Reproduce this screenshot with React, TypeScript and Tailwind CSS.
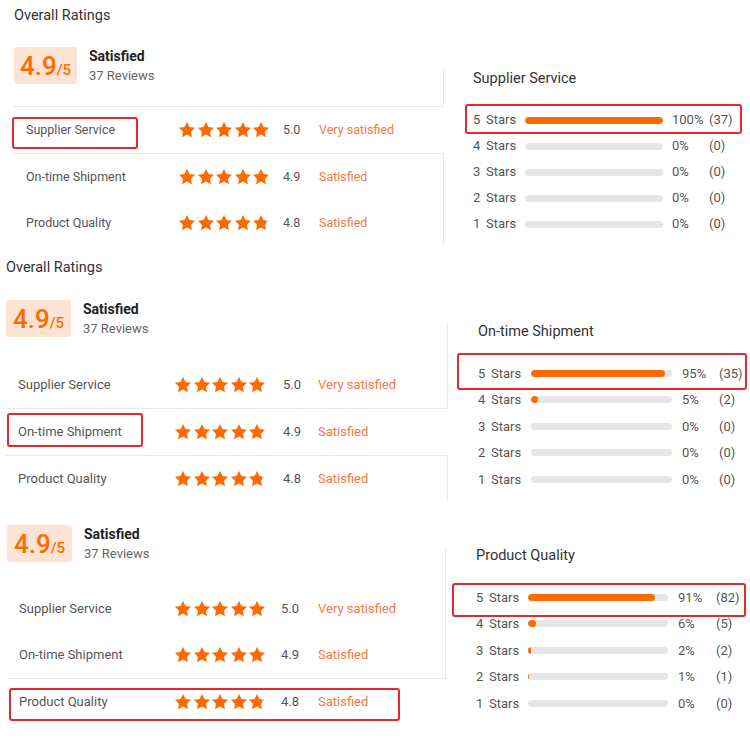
import { useId } from 'react';

type Row = { label: string; value: string; status: string; fill: number };
type Dist = { pct: number; count: number };

const ROWS: Row[] = [
  { label: 'Supplier Service', value: '5.0', status: 'Very satisfied', fill: 1 },
  { label: 'On-time Shipment', value: '4.9', status: 'Satisfied', fill: 1 },
  { label: 'Product Quality', value: '4.8', status: 'Satisfied', fill: 0.8 },
];

type Cfg = {
  h: string;
  pad: string;
  title: boolean;
  flexMt: string;
  leftW: string;
  rowText: string;
  labelW: string;
  starsW: string;
  valueW: string;
  scoreW: string;
  spacer: string;
  highlight: number;
  rightMl: string;
  rightTitle: string;
  rightMt: string;
  rightRowH: string;
  rLabelW: string;
  barW: string;
  pctW: string;
  dist: Dist[];
  redLeft: string;
  redRight: string;
};

const CFGS: Cfg[] = [
  {
    h: 'h-[250px]',
    pad: 'pl-[14px] pt-[6px]',
    title: true,
    flexMt: 'mt-[21px]',
    leftW: 'w-[430px]',
    rowText: 'text-[12.5px]',
    labelW: 'w-[153px]',
    starsW: 'w-[104px]',
    valueW: 'w-[36px]',
    scoreW: 'w-[63px]',
    spacer: 'h-[22px]',
    highlight: 0,
    rightMl: 'ml-[29px]',
    rightTitle: 'Supplier Service',
    rightMt: 'mt-[22px]',
    rightRowH: 'h-[26px]',
    rLabelW: 'w-[52px]',
    barW: 'w-[138px]',
    pctW: 'w-[37px] ml-[9px]',
    dist: [
      { pct: 100, count: 37 },
      { pct: 0, count: 0 },
      { pct: 0, count: 0 },
      { pct: 0, count: 0 },
      { pct: 0, count: 0 },
    ],
    redLeft: 'left-[12px] top-[117px] w-[126px] h-[32px]',
    redRight: 'left-[465px] top-[104px] w-[277px] h-[30px]',
  },
  {
    h: 'h-[260px]',
    pad: 'pl-[6px] pt-[8px]',
    title: true,
    flexMt: 'mt-[22px]',
    leftW: 'w-[442px]',
    rowText: 'text-[13px]',
    labelW: 'w-[157px]',
    starsW: 'w-[108px]',
    valueW: 'w-[35px]',
    scoreW: 'w-[65px]',
    spacer: 'h-[25px]',
    highlight: 1,
    rightMl: 'ml-[30px]',
    rightTitle: 'On-time Shipment',
    rightMt: 'mt-[22px]',
    rightRowH: 'h-[26.5px]',
    rLabelW: 'w-[53px]',
    barW: 'w-[141px]',
    pctW: 'w-[37px] ml-[10px]',
    dist: [
      { pct: 95, count: 35 },
      { pct: 5, count: 2 },
      { pct: 0, count: 0 },
      { pct: 0, count: 0 },
      { pct: 0, count: 0 },
    ],
    redLeft: 'left-[7px] top-[163px] w-[136px] h-[34px]',
    redRight: 'left-[457px] top-[103px] w-[290px] h-[37px]',
  },
  {
    h: 'h-[240px]',
    pad: 'pl-[7px] pt-[15px]',
    title: false,
    flexMt: 'mt-0',
    leftW: 'w-[439px]',
    rowText: 'text-[13px]',
    labelW: 'w-[156px]',
    starsW: 'w-[106px]',
    valueW: 'w-[37px]',
    scoreW: 'w-[65px]',
    spacer: 'h-[24px]',
    highlight: 2,
    rightMl: 'ml-[30px]',
    rightTitle: 'Product Quality',
    rightMt: 'mt-[21px]',
    rightRowH: 'h-[26.5px]',
    rLabelW: 'w-[52px]',
    barW: 'w-[140px]',
    pctW: 'w-[38px] ml-[10px]',
    dist: [
      { pct: 91, count: 82 },
      { pct: 6, count: 5 },
      { pct: 2, count: 2 },
      { pct: 1, count: 1 },
      { pct: 0, count: 0 },
    ],
    redLeft: 'left-[9px] top-[178px] w-[391px] h-[33px]',
    redRight: 'left-[452px] top-[73px] w-[294px] h-[34px]',
  },
];

function Star({ fill }: { fill: number }) {
  const raw = useId();
  const id = 'g' + raw.replace(/[^a-zA-Z0-9]/g, '');
  return (
    <svg width="16" height="15.2" viewBox="2 2 20 19.02" className="block shrink-0">
      <defs>
        <linearGradient id={id} x1="0" x2="1" y1="0" y2="0">
          <stop offset={fill} stopColor="#ff6a00" />
          <stop offset={fill} stopColor="#cdcdcd" />
        </linearGradient>
      </defs>
      <path
        d="M12 2l3.09 6.26L22 9.27l-5 4.87 1.18 6.88L12 17.77l-6.18 3.25L7 14.14 2 9.27l6.91-1.01L12 2z"
        fill={`url(#${id})`}
      />
    </svg>
  );
}

function Stars({ fill }: { fill: number }) {
  return (
    <div className="flex items-center gap-[2.6px]">
      {[0, 1, 2, 3].map((i) => (
        <Star key={i} fill={1} />
      ))}
      <Star fill={fill === 1 ? 1 : 0.84} />
    </div>
  );
}

function RatingRow({ row, cfg }: { row: Row; cfg: Cfg }) {
  return (
    <div className={`flex h-[46px] items-center pl-[12px] ${cfg.rowText}`}>
      <div className={`${cfg.labelW} shrink-0 text-[#555]`}>{row.label}</div>
      <div className={`${cfg.starsW} shrink-0`}>
        <Stars fill={row.fill} />
      </div>
      <div className={`${cfg.valueW} shrink-0 text-[#555]`}>{row.value}</div>
      <div className="text-[#f47a3f]">{row.status}</div>
    </div>
  );
}

function ScoreHeader({ cfg }: { cfg: Cfg }) {
  return (
    <div className="flex h-[37px] items-start">
      <div
        className={`${cfg.scoreW} flex h-[37px] shrink-0 items-baseline justify-center rounded-[3px] bg-[#fde3d3] pt-[1px] leading-[36px] text-[#ff6a00]`}
      >
        <span className="text-[26px] font-medium">4.9</span>
        <span className="text-[15px] font-medium">/5</span>
      </div>
      <div className="-mt-[1px] ml-[12px] flex flex-col leading-[20px]">
        <span className="text-[14px] font-bold text-[#222]">Satisfied</span>
        <span className="text-[13px] text-[#666]">37 Reviews</span>
      </div>
    </div>
  );
}

function LeftCol({ cfg }: { cfg: Cfg }) {
  const before = ROWS.slice(0, cfg.highlight);
  const hl = ROWS[cfg.highlight];
  const after = ROWS.slice(cfg.highlight + 1);
  return (
    <div className={`${cfg.leftW} flex shrink-0 flex-col`}>
      <div className="flex border-b border-[#e8e8e8]">
        <div className="min-w-0 flex-1">
          <ScoreHeader cfg={cfg} />
          <div className={cfg.spacer} />
          {before.map((r) => (
            <RatingRow key={r.label} row={r} cfg={cfg} />
          ))}
        </div>
        <div className="mt-[22px] w-px shrink-0 bg-[#e8e8e8]" />
      </div>
      <RatingRow row={hl} cfg={cfg} />
      {after.length > 0 && (
        <div className="flex border-t border-[#e8e8e8]">
          <div className="min-w-0 flex-1">
            {after.map((r) => (
              <RatingRow key={r.label} row={r} cfg={cfg} />
            ))}
          </div>
          <div className="w-px shrink-0 bg-[#e8e8e8]" />
        </div>
      )}
    </div>
  );
}

function RightCol({ cfg }: { cfg: Cfg }) {
  return (
    <div className={`${cfg.rightMl} ${cfg.rightMt} flex flex-col`}>
      <div className="h-[20px] text-[14.5px] leading-[20px] text-[#333]">{cfg.rightTitle}</div>
      <div className="mt-[18px] flex flex-col">
        {cfg.dist.map((d, i) => (
          <div key={i} className={`flex ${cfg.rightRowH} items-center text-[13px] text-[#555]`}>
            <div className={`${cfg.rLabelW} flex shrink-0`}>
              <span className="w-[13px]">{5 - i}</span>
              <span>Stars</span>
            </div>
            <div className={`${cfg.barW} h-[7px] shrink-0 overflow-hidden rounded-full bg-[#e6e6e6]`}>
              {d.pct > 0 && (
                <div className="h-full rounded-full bg-[#ff6a00]" style={{ width: `${d.pct}%` }} />
              )}
            </div>
            <div className={`${cfg.pctW} shrink-0`}>{d.pct}%</div>
            <div>({d.count})</div>
          </div>
        ))}
      </div>
    </div>
  );
}

function Panel({ cfg }: { cfg: Cfg }) {
  return (
    <div className={`relative ${cfg.h} ${cfg.pad} overflow-hidden`}>
      {cfg.title && (
        <div className="h-[20px] text-[14.5px] leading-[20px] text-[#333]">Overall Ratings</div>
      )}
      <div className={`flex items-start ${cfg.flexMt}`}>
        <LeftCol cfg={cfg} />
        <RightCol cfg={cfg} />
      </div>
      <div className={`pointer-events-none absolute rounded-[3px] border-2 border-[#e8262b] ${cfg.redLeft}`} />
      <div className={`pointer-events-none absolute rounded-[3px] border-2 border-[#e8262b] ${cfg.redRight}`} />
    </div>
  );
}

export default function App() {
  return (
    <div className="h-[750px] w-[750px] overflow-hidden bg-white font-['Roboto','Noto_Sans',sans-serif]">
      {CFGS.map((c, i) => (
        <Panel key={i} cfg={c} />
      ))}
    </div>
  );
}
